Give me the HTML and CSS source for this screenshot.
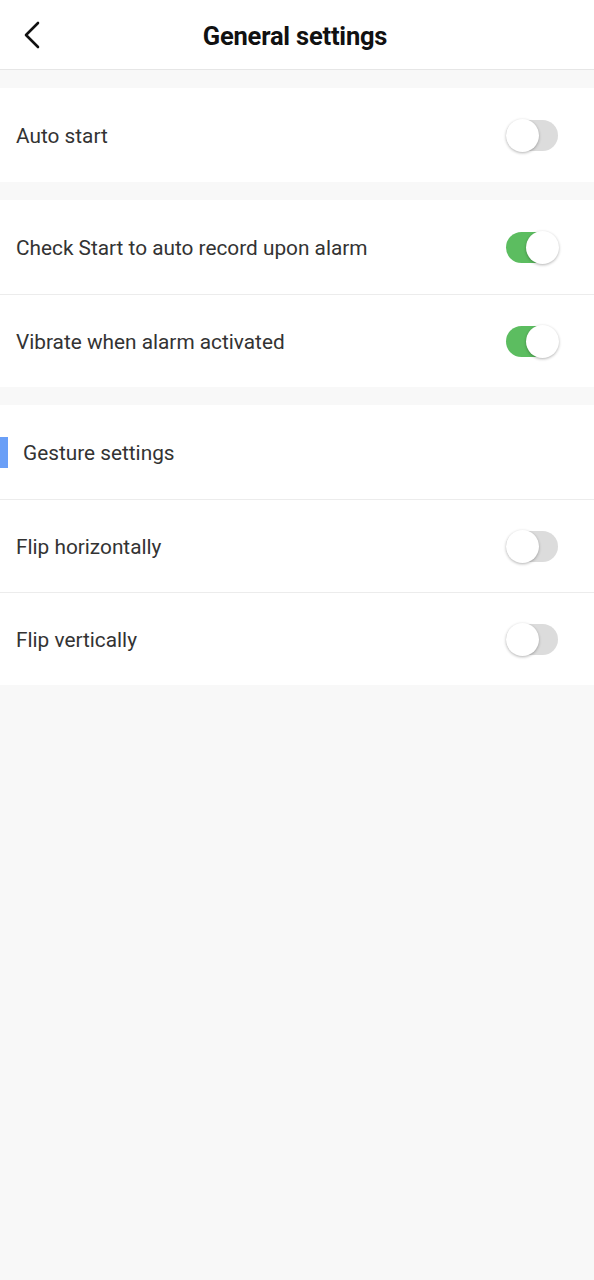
FILE: index.html
```html
<!DOCTYPE html>
<html lang="en">
<head>
<meta charset="utf-8">
<title>General settings</title>
<link rel="stylesheet" href="styles.css">
</head>
<body>
<header class="topbar">
  <button class="back" aria-label="Back">
    <svg width="20" height="28" viewBox="0 0 20 28"><path d="M16 2 L4 14 L16 26" fill="none" stroke="#111" stroke-width="2.6" stroke-linecap="round" stroke-linejoin="round"/></svg>
  </button>
  <h1 class="title">General settings</h1>
</header>

<main class="content">
  <section class="group">
    <div class="row"><span class="label">Auto start</span><span class="switch"></span></div>
  </section>

  <section class="group">
    <div class="row"><span class="label">Check Start to auto record upon alarm</span><span class="switch on"></span></div>
    <div class="row"><span class="label">Vibrate when alarm activated</span><span class="switch on"></span></div>
  </section>

  <section class="group">
    <div class="row section-head"><span class="mark"></span><span class="label">Gesture settings</span></div>
    <div class="row"><span class="label">Flip horizontally</span><span class="switch"></span></div>
    <div class="row"><span class="label">Flip vertically</span><span class="switch"></span></div>
  </section>
</main>
</body>
</html>
```

FILE: styles.css
```css
* { box-sizing: border-box; }

html, body {
  margin: 0;
  padding: 0;
  background: #f8f8f8;
  font-family: Roboto, "Liberation Sans", sans-serif;
  color: #333;
}

.topbar {
  position: relative;
  height: 70px;
  background: #fff;
  border-bottom: 1px solid #e6e6e6;
  display: flex;
  align-items: center;
  justify-content: center;
}

.back {
  position: absolute;
  left: 22px;
  top: 21px;
  padding: 0;
  border: 0;
  background: none;
  width: 20px;
  height: 28px;
}

.title {
  margin: 2px 0 0 -4px;
  font-size: 25.5px;
  font-weight: 700;
  color: #111;
  letter-spacing: -0.2px;
}

.content {
  display: flex;
  flex-direction: column;
  gap: 18px;
  padding-top: 18px;
}

.group {
  background: #fff;
  display: flex;
  flex-direction: column;
}

.row {
  height: 94px;
  display: flex;
  align-items: center;
  justify-content: space-between;
  padding: 0 36px 0 16px;
}

.row + .row {
  border-top: 1px solid #ececec;
  height: 93px;
}

.label {
  font-size: 20.8px;
  color: #333;
  padding-top: 2px;
}

.section-head {
  justify-content: flex-start;
  padding-left: 0;
}

.section-head .mark {
  width: 8px;
  height: 31px;
  background: #6a9ff7;
  margin-right: 15px;
}

.switch {
  position: relative;
  width: 52px;
  height: 31px;
  border-radius: 16px;
  background: #dcdcdc;
  flex: none;
}

.switch::after {
  content: "";
  position: absolute;
  top: -1px;
  left: 0;
  width: 33px;
  height: 33px;
  border-radius: 50%;
  background: #fff;
  box-shadow: 0 1px 3px rgba(0,0,0,0.3);
}

.switch.on {
  background: #5cbd60;
}

.switch.on::after {
  left: auto;
  right: -1px;
}
```
